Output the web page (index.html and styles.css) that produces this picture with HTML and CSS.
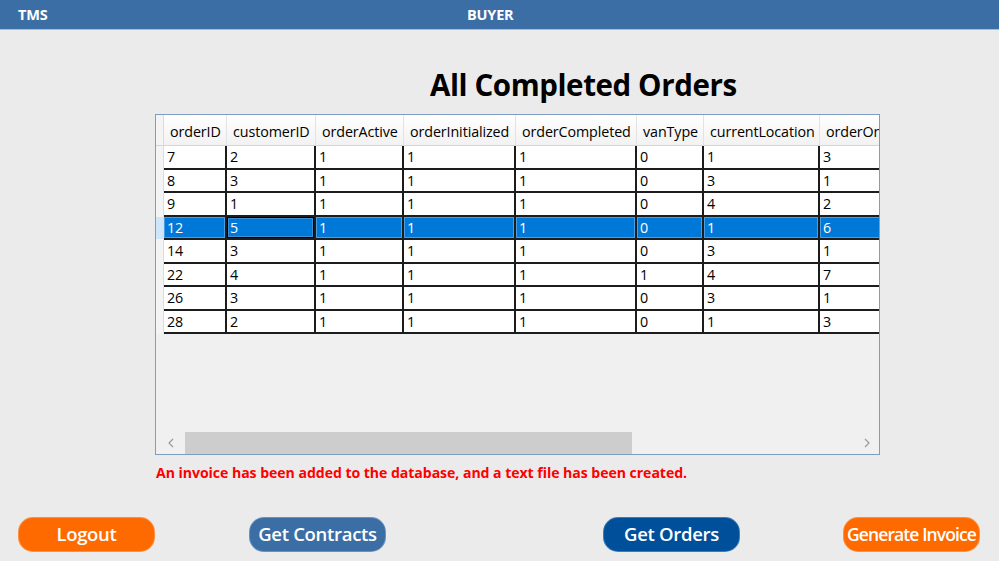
FILE: index.html
```html
<!DOCTYPE html>
<html>
<head>
<meta charset="utf-8">
<link rel="stylesheet" href="styles.css">
</head>
<body>
<header class="topbar">
  <span class="brand">TMS</span>
  <span class="role">BUYER</span>
</header>
<main class="content">
  <h1 class="title">All Completed Orders</h1>
  <div class="datagrid">
    <div class="viewport">
      <table class="orders">
        <colgroup>
          <col class="c-rh"><col class="c1"><col class="c2"><col class="c3"><col class="c4"><col class="c5"><col class="c6"><col class="c7"><col class="c8">
        </colgroup>
        <thead>
          <tr>
            <th class="rh"></th><th>orderID</th><th>customerID</th><th>orderActive</th><th>orderInitialized</th><th>orderCompleted</th><th>vanType</th><th>currentLocation</th><th>orderOnTime</th>
          </tr>
        </thead>
        <tbody>
          <tr><td class="rh"></td><td>7</td><td>2</td><td>1</td><td>1</td><td>1</td><td>0</td><td>1</td><td>3</td></tr>
          <tr><td class="rh"></td><td>8</td><td>3</td><td>1</td><td>1</td><td>1</td><td>0</td><td>3</td><td>1</td></tr>
          <tr><td class="rh"></td><td>9</td><td>1</td><td>1</td><td>1</td><td>1</td><td>0</td><td>4</td><td>2</td></tr>
          <tr class="selected"><td class="rh"></td><td>12</td><td class="current">5</td><td>1</td><td>1</td><td>1</td><td>0</td><td>1</td><td>6</td></tr>
          <tr><td class="rh"></td><td>14</td><td>3</td><td>1</td><td>1</td><td>1</td><td>0</td><td>3</td><td>1</td></tr>
          <tr><td class="rh"></td><td>22</td><td>4</td><td>1</td><td>1</td><td>1</td><td>1</td><td>4</td><td>7</td></tr>
          <tr><td class="rh"></td><td>26</td><td>3</td><td>1</td><td>1</td><td>1</td><td>0</td><td>3</td><td>1</td></tr>
          <tr><td class="rh"></td><td>28</td><td>2</td><td>1</td><td>1</td><td>1</td><td>0</td><td>1</td><td>3</td></tr>
        </tbody>
      </table>
    </div>
    <div class="hscroll">
      <span class="arrow">
        <svg width="8" height="10" viewBox="0 0 8 10"><path d="M6 1 L2 5 L6 9" fill="none" stroke="#9a9a9a" stroke-width="1.2"/></svg>
      </span>
      <div class="track"><div class="thumb"></div></div>
      <span class="arrow">
        <svg width="8" height="10" viewBox="0 0 8 10"><path d="M2 1 L6 5 L2 9" fill="none" stroke="#9a9a9a" stroke-width="1.2"/></svg>
      </span>
    </div>
  </div>
  <p class="message">An invoice has been added to the database, and a text file has been created.</p>
</main>
<footer class="actions">
  <button class="btn orange">Logout</button>
  <span></span>
  <button class="btn blue">Get Contracts</button>
  <span></span>
  <button class="btn navy">Get Orders</button>
  <span></span>
  <button class="btn orange tight">Generate Invoice</button>
</footer>
</body>
</html>
```
FILE: styles.css
```css
html, body {
  margin: 0;
  padding: 0;
}
body {
  background: #ebebeb;
  font-family: "Open Sans", "Noto Sans", sans-serif;
  width: 999px;
  height: 561px;
  overflow: hidden;
}
.topbar {
  height: 30px;
  background: #3b6ea5;
  border-bottom: 1px solid #a9bdd6;
  box-sizing: border-box;
  display: grid;
  grid-template-columns: 449px auto;
  padding-left: 18px;
  align-items: center;
  color: #fff;
  font-weight: 700;
  font-size: 14.5px;
  letter-spacing: -0.2px;
}
.content {
  padding-left: 155px;
}
.title {
  margin: 0;
  padding: 37px 0 0 275px;
  height: 47px;
  font-size: 29.5px;
  font-weight: 700;
  letter-spacing: -0.4px;
  color: #000;
  line-height: 36px;
  box-sizing: content-box;
}
.datagrid {
  width: 725px;
  height: 341px;
  box-sizing: border-box;
  border: 1px solid #7f9dc2;
  background: #f0f0f0;
  display: flex;
  flex-direction: column;
}
.viewport {
  flex: 1;
  overflow: hidden;
}
.orders {
  table-layout: fixed;
  border-collapse: separate;
  border-spacing: 0;
  width: 900px;
  font-size: 14.3px;
  letter-spacing: -0.1px;
  color: #000;
}
.c-rh { width: 8px; }
.c1 { width: 63px; }
.c2 { width: 89px; }
.c3 { width: 88px; }
.c4 { width: 112px; }
.c5 { width: 121px; }
.c6 { width: 67px; }
.c7 { width: 116px; }
.c8 { width: 236px; }
.orders th {
  height: 31px;
  box-sizing: border-box;
  padding: 2px 0 0 6px;
  text-align: left;
  font-weight: 400;
  background: linear-gradient(#ffffff, #f2f2f2);
  border-right: 1px solid #e3e3e3;
  border-bottom: 1px solid #d5d5d5;
  white-space: nowrap;
  overflow: hidden;
}
.orders th.rh {
  padding: 0;
  background: #f4f4f4;
  border-right: 1px solid #dcdcdc;
}
.orders td {
  height: 23.5px;
  box-sizing: border-box;
  padding: 1px 0 0 3px;
  background: #fff;
  border-right: 2px solid #1c1c1c;
  border-bottom: 2px solid #1c1c1c;
  white-space: nowrap;
  overflow: hidden;
  line-height: 20px;
}
.orders td.rh {
  padding: 0;
  background: #f4f4f4;
  border-right: 1px solid #dcdcdc;
  border-bottom: 1px solid #f4f4f4;
}
.orders tr.selected td {
  background: #0078d7;
  color: #fff;
  box-shadow: inset 0 0 0 1px #4a9ee2;
}
.orders tr.selected td.rh {
  background: #cfe6fa;
  box-shadow: none;
}
.orders tr.selected td.current {
  box-shadow: inset 0 0 0 1px #000, inset 0 0 0 2px #3a8fd6;
}
.hscroll {
  height: 22px;
  display: flex;
  align-items: center;
  background: #f0f0f0;
}
.arrow {
  width: 29px;
  height: 22px;
  display: flex;
  align-items: center;
  justify-content: center;
}
.arrow:last-child {
  width: 24px;
}
.track {
  flex: 1;
  height: 22px;
}
.thumb {
  width: 447px;
  height: 22px;
  background: #cdcdcd;
}
.message {
  margin: 8px 0 0 1px;
  color: #ff0000;
  font-weight: 700;
  font-size: 14.1px;
  letter-spacing: -0.05px;
  line-height: 20px;
}
.actions {
  margin-top: 34px;
  padding-left: 18px;
  display: grid;
  grid-template-columns: 137px 94px 137px 217px 137px 103px 137px;
}
.btn {
  height: 35px;
  border-radius: 15px;
  border: 1px solid rgba(255,255,255,0.25);
  color: #fff;
  font-family: "Open Sans", "Noto Sans", sans-serif;
  font-weight: 600;
  font-size: 18.5px;
  letter-spacing: -0.3px;
  padding: 0 0 2px 0;
  white-space: nowrap;
}
.btn.tight {
  letter-spacing: -0.9px;
  font-size: 17.5px;
}
.orange { background: #ff6a00; }
.blue { background: #3b6ea5; }
.navy { background: #004f9a; }
```
